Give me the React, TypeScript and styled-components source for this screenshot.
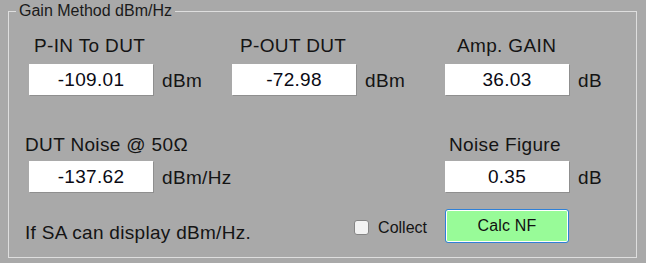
import styled, { createGlobalStyle } from 'styled-components';

const GlobalStyle = createGlobalStyle`
  html, body {
    margin: 0;
    padding: 0;
    background: #a9a9a9;
  }
  body {
    font-family: 'Liberation Sans', Arial, sans-serif;
    color: #141414;
    padding-top: 2px;
  }
`;

const GroupBox = styled.fieldset`
  box-sizing: border-box;
  width: 629px;
  margin: 0 0 0 8px;
  padding: 0;
  border: 1px solid #dedede;
  min-inline-size: 0;
`;

const Legend = styled.legend`
  margin-left: 7px;
  padding: 0 3px;
  font-size: 16px;
  line-height: 18px;
  color: #1a1a1a;
`;

const Body = styled.div`
  padding: 15px 0 14px 20px;
`;

const Row = styled.div<{ $top?: number }>`
  display: grid;
  grid-template-columns: 203px 213px 1fr;
  margin-top: ${p => p.$top ?? 0}px;
`;

const Cell = styled.div<{ $gap: number }>`
  display: flex;
  flex-direction: column;
  align-items: flex-start;
  gap: ${p => p.$gap}px;
`;

const Label = styled.div<{ $indent: number }>`
  font-size: 19px;
  line-height: 22px;
  letter-spacing: 0.35px;
  margin-left: ${p => p.$indent}px;
  white-space: nowrap;
`;

const Field = styled.div`
  display: flex;
  align-items: center;
  gap: 9px;
`;

const ValueBox = styled.input`
  box-sizing: border-box;
  width: 124px;
  height: 31px;
  border: none;
  outline: none;
  padding: 0;
  background: #fff;
  box-shadow: 1px 1px 0 #8f8f8f;
  font-family: inherit;
  font-size: 19px;
  letter-spacing: 0.3px;
  color: #0a0a14;
  text-align: center;
`;

const Unit = styled.span`
  font-size: 19px;
  line-height: 22px;
  letter-spacing: 0.35px;
  padding-top: 3px;
  white-space: nowrap;
`;

const FootLeft = styled.div`
  grid-column: 1 / 3;
  display: flex;
  align-items: center;
  justify-content: space-between;
  padding-right: 18px;
  align-self: stretch;
`;

const Note = styled.span`
  font-size: 19px;
  line-height: 22px;
  letter-spacing: 0.3px;
  margin-left: -4px;
  align-self: flex-end;
  margin-bottom: -1px;
  white-space: nowrap;
`;

const CheckLabel = styled.label`
  display: flex;
  align-items: center;
  gap: 9px;
  font-size: 16px;
  line-height: 18px;
  padding-top: 3px;
`;

const Check = styled.input`
  appearance: none;
  box-sizing: border-box;
  width: 15px;
  height: 15px;
  margin: 0;
  border: 1px solid #858585;
  border-radius: 3px;
  background: #f2f2f2;
`;

const CalcButton = styled.button`
  box-sizing: border-box;
  width: 124px;
  height: 34px;
  background: #98fb98;
  border: 1px solid #2f80d8;
  border-radius: 3px;
  box-shadow: inset 0 0 0 1px #ffffff;
  font-family: inherit;
  font-size: 16px;
  letter-spacing: 0.2px;
  color: #111;
  padding: 0;
`;

const Measure = ({ label, indent, value, unit, gap }: {
  label: string; indent: number; value: string; unit: string; gap: number;
}) => (
  <Cell $gap={gap}>
    <Label $indent={indent}>{label}</Label>
    <Field>
      <ValueBox readOnly value={value} />
      <Unit>{unit}</Unit>
    </Field>
  </Cell>
);

export default function App() {
  return (
    <>
      <GlobalStyle />
      <GroupBox>
        <Legend>Gain Method dBm/Hz</Legend>
        <Body>
          <Row>
            <Measure label="P-IN To DUT" indent={5} value="-109.01" unit="dBm" gap={7} />
            <Measure label="P-OUT DUT" indent={8} value="-72.98" unit="dBm" gap={7} />
            <Measure label="Amp. GAIN" indent={12} value="36.03" unit="dB" gap={7} />
          </Row>
          <Row $top={39}>
            <Measure label="DUT Noise @ 50Ω" indent={-4} value="-137.62" unit="dBm/Hz" gap={5} />
            <div />
            <Measure label="Noise Figure" indent={4} value="0.35" unit="dB" gap={5} />
          </Row>
          <Row $top={17}>
            <FootLeft>
              <Note>If SA can display dBm/Hz.</Note>
              <CheckLabel>
                <Check type="checkbox" />
                Collect
              </CheckLabel>
            </FootLeft>
            <div>
              <CalcButton>Calc NF</CalcButton>
            </div>
          </Row>
        </Body>
      </GroupBox>
    </>
  );
}
